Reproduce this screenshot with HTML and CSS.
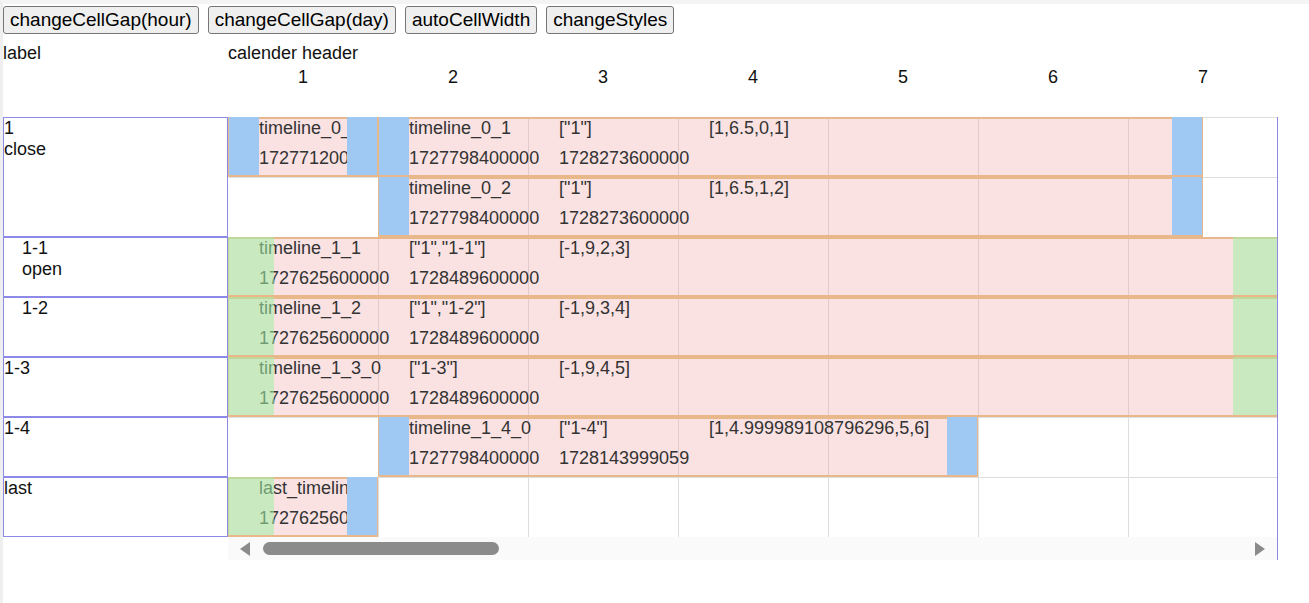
FILE: index.html
```html
<!DOCTYPE html>
<html>
<head>
<meta charset="utf-8">
<link rel="stylesheet" href="styles.css">
</head>
<body>
<div class="toolbar">
  <button class="btn">changeCellGap(hour)</button>
  <button class="btn">changeCellGap(day)</button>
  <button class="btn">autoCellWidth</button>
  <button class="btn">changeStyles</button>
</div>
<div class="gantt">
  <div class="labels">
    <div class="labels-head">label</div>
    <div class="label-cell double"><div>1</div><div>close</div></div>
    <div class="label-cell indent"><div>1-1</div><div>open</div></div>
    <div class="label-cell indent"><div>1-2</div></div>
    <div class="label-cell"><div>1-3</div></div>
    <div class="label-cell"><div>1-4</div></div>
    <div class="label-cell"><div>last</div></div>
  </div>
  <div class="calendar">
    <div class="cal-title">calender header</div>
    <div class="cal-days">
      <div class="day">1</div><div class="day">2</div><div class="day">3</div><div class="day">4</div><div class="day">5</div><div class="day">6</div><div class="day">7</div>
    </div>
    <div class="cal-body">
      <div class="cal-row">
        <div class="bar" style="grid-column: 1 / 3">
          <div class="bar-content">
            <div class="bar-grid">
              <span>timeline_0_0</span><span>["1"]</span><span>[0,1,0,1]</span>
              <span>1727712000000</span><span>1727798400000</span><span></span>
            </div>
          </div>
          <div class="handle start"></div><div class="handle end"></div>
        </div>
        <div class="bar" style="grid-column: 3 / 14">
          <div class="bar-content">
            <div class="bar-grid">
              <span>timeline_0_1</span><span>["1"]</span><span>[1,6.5,0,1]</span>
              <span>1727798400000</span><span>1728273600000</span><span></span>
            </div>
          </div>
          <div class="handle start"></div><div class="handle end"></div>
        </div>
      </div>
      <div class="cal-row">
        <div class="bar" style="grid-column: 3 / 14">
          <div class="bar-content">
            <div class="bar-grid">
              <span>timeline_0_2</span><span>["1"]</span><span>[1,6.5,1,2]</span>
              <span>1727798400000</span><span>1728273600000</span><span></span>
            </div>
          </div>
          <div class="handle start"></div><div class="handle end"></div>
        </div>
      </div>
      <div class="cal-row">
        <div class="bar" style="grid-column: 1 / 15">
          <div class="bar-content">
            <div class="bar-grid">
              <span>timeline_1_1</span><span>["1","1-1"]</span><span>[-1,9,2,3]</span>
              <span>1727625600000</span><span>1728489600000</span><span></span>
            </div>
          </div>
          <div class="handle clamp-start"></div><div class="handle clamp-end"></div>
        </div>
      </div>
      <div class="cal-row">
        <div class="bar" style="grid-column: 1 / 15">
          <div class="bar-content">
            <div class="bar-grid">
              <span>timeline_1_2</span><span>["1","1-2"]</span><span>[-1,9,3,4]</span>
              <span>1727625600000</span><span>1728489600000</span><span></span>
            </div>
          </div>
          <div class="handle clamp-start"></div><div class="handle clamp-end"></div>
        </div>
      </div>
      <div class="cal-row">
        <div class="bar" style="grid-column: 1 / 15">
          <div class="bar-content">
            <div class="bar-grid">
              <span>timeline_1_3_0</span><span>["1-3"]</span><span>[-1,9,4,5]</span>
              <span>1727625600000</span><span>1728489600000</span><span></span>
            </div>
          </div>
          <div class="handle clamp-start"></div><div class="handle clamp-end"></div>
        </div>
      </div>
      <div class="cal-row">
        <div class="bar" style="grid-column: 3 / 11">
          <div class="bar-content">
            <div class="bar-grid">
              <span>timeline_1_4_0</span><span>["1-4"]</span><span>[1,4.999989108796296,5,6]</span>
              <span>1727798400000</span><span>1728143999059</span><span></span>
            </div>
          </div>
          <div class="handle start"></div><div class="handle end"></div>
        </div>
      </div>
      <div class="cal-row">
        <div class="bar" style="grid-column: 1 / 3">
          <div class="bar-content">
            <div class="bar-grid">
              <span>last_timeline</span><span>["last"]</span><span>[-1,1,6,7]</span>
              <span>1727625600000</span><span>1727798400000</span><span></span>
            </div>
          </div>
          <div class="handle clamp-start"></div><div class="handle end"></div>
        </div>
      </div>
      <div class="hscroll">
        <svg class="arrow" width="11" height="14" viewBox="0 0 11 14"><path d="M10 0 L10 14 L0 7 Z" fill="#8b8b8b"/></svg>
        <div class="thumb"></div>
        <svg class="arrow right" width="11" height="14" viewBox="0 0 11 14"><path d="M1 0 L1 14 L11 7 Z" fill="#8b8b8b"/></svg>
      </div>
    </div>
  </div>
</div>
</body>
</html>
```

FILE: styles.css
```css
* { box-sizing: border-box; }

html, body { margin: 0; padding: 0; }

body {
  min-height: 603px;
  border-top: 4px solid #f4f4f4;
  border-left: 3px solid #efefef;
  background: #fff;
  font-family: "Liberation Sans", Arial, sans-serif;
  font-size: 18px;
  color: #111;
}

.toolbar {
  display: flex;
  gap: 9px;
  padding-top: 2px;
}

.btn {
  height: 28px;
  margin: 0;
  padding: 0 6px;
  font-family: "Liberation Sans", Arial, sans-serif;
  font-size: 19px;
  color: #000;
  background: #efefef;
  border: 1px solid #767676;
  border-radius: 3px;
}

.gantt {
  display: flex;
  align-items: flex-start;
  margin-top: 7px;
}

.labels {
  width: 225px;
  flex: none;
}

.labels-head {
  height: 76px;
  padding-top: 2px;
}

.label-cell {
  height: 60px;
  border: 1px solid #8d89e6;
  padding-left: 0;
}

.label-cell.double { height: 120px; }
.label-cell.indent { padding-left: 18px; }

.calendar {
  width: 1050px;
  flex: none;
}

.cal-title {
  height: 26px;
  padding-top: 2px;
}

.cal-days {
  display: flex;
  height: 50px;
}

.day {
  width: 150px;
  flex: none;
  text-align: center;
}

.cal-body {
  border-right: 1px solid #8d89e6;
  overflow: hidden;
}

.cal-row {
  display: grid;
  grid-template-columns: repeat(14, 75px);
  height: 60px;
  background-color: #fff;
  background-image:
    linear-gradient(#fff, #fff),
    linear-gradient(#dedede, #dedede),
    repeating-linear-gradient(to right, #dedede 0 1px, transparent 1px 150px);
  background-size: 1px 100%, 100% 1px, 100% 100%;
  background-repeat: no-repeat, no-repeat, no-repeat;
  background-position: 0 0, 0 0, 0 0;
}

.bar {
  grid-row: 1;
  position: relative;
  height: 60px;
  border-style: solid;
  border-color: #e8b88a;
  border-width: 2px 1px;
  background: rgba(240, 160, 160, 0.3);
  min-width: 0;
}

.bar-content {
  height: 100%;
  overflow: hidden;
  padding-left: 30px;
}

.bar-grid {
  display: grid;
  grid-template-columns: repeat(3, 150px);
  grid-auto-rows: 30px;
  margin-top: -1px;
  white-space: nowrap;
  color: #333;
}

.handle {
  position: absolute;
  top: -2px;
  bottom: 0;
}

.handle.start { left: 0; width: 30px; background: #9fc9f2; }
.handle.end { right: 0; width: 30px; background: #9fc9f2; }
.handle.clamp-start { left: -1px; width: 46px; background: rgba(160, 241, 165, 0.55); }
.handle.clamp-end { right: -1px; width: 45px; background: rgba(160, 241, 165, 0.55); }

.hscroll {
  height: 23px;
  display: flex;
  align-items: center;
  background: #fafafa;
  padding: 0 12px;
}

.arrow { flex: none; display: block; }
.arrow.right { margin-left: auto; }

.thumb {
  width: 236px;
  height: 13px;
  margin-left: 12px;
  border-radius: 7px;
  background: #8b8b8b;
}
```
